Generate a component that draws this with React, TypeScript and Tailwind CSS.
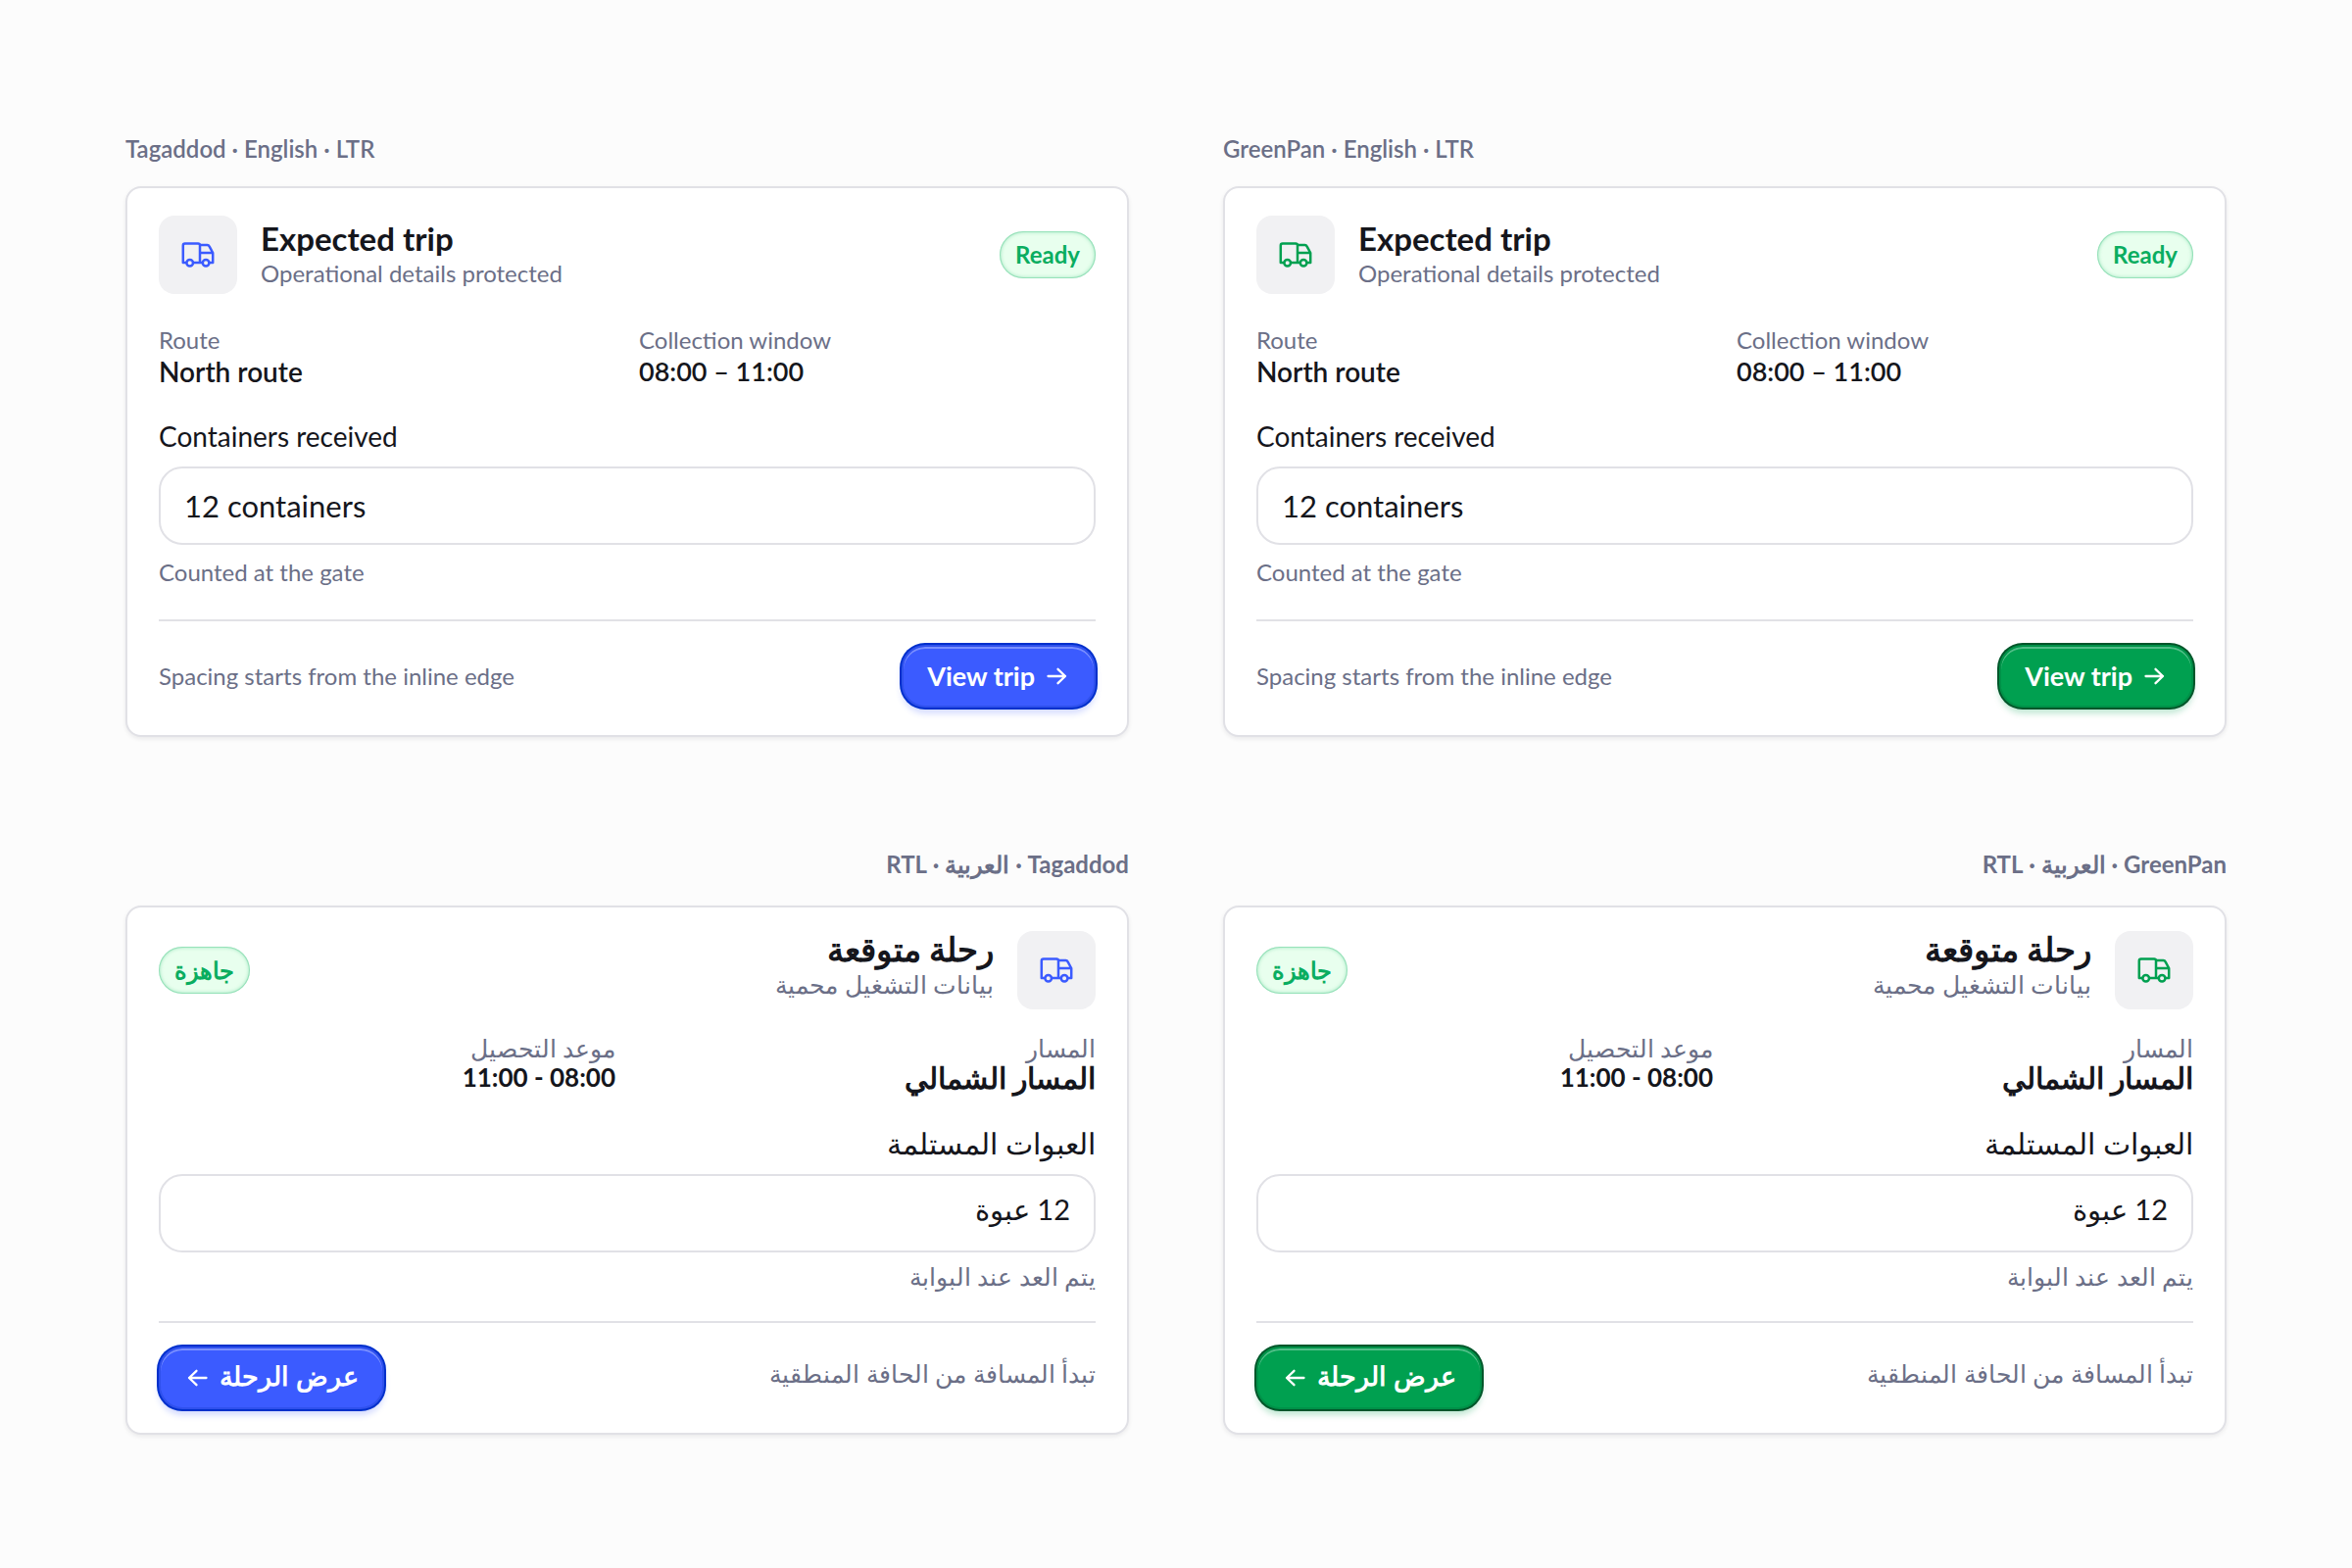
import clsx from "clsx";
import { useId } from "react";

type Dir = "ltr" | "rtl";
type Brand = "tagaddod" | "greenpan";

const content = {
  ltr: {
    language: "English",
    title: "Expected trip",
    subtitle: "Operational details protected",
    status: "Ready",
    routeLabel: "Route",
    route: "North route",
    windowLabel: "Collection window",
    window: "08:00 – 11:00",
    field: "Containers received",
    value: "12 containers",
    hint: "Counted at the gate",
    note: "Spacing starts from the inline edge",
    action: "View trip",
  },
  rtl: {
    language: "العربية",
    title: "رحلة متوقعة",
    subtitle: "بيانات التشغيل محمية",
    status: "جاهزة",
    routeLabel: "المسار",
    route: "المسار الشمالي",
    windowLabel: "موعد التحصيل",
    window: "08:00 - 11:00",
    field: "العبوات المستلمة",
    value: "12 عبوة",
    hint: "يتم العد عند البوابة",
    note: "تبدأ المسافة من الحافة المنطقية",
    action: "عرض الرحلة",
  },
};

const brands = {
  tagaddod: {
    name: "Tagaddod",
    icon: "text-[#3b5bff]",
    button:
      "border-[#2f50ec] bg-[#3b5bff] shadow-[0_0_0_2px_#0030cc,0_6px_6px_rgba(59,91,255,0.22),inset_0_2px_0_rgba(255,255,255,0.32)]",
  },
  greenpan: {
    name: "GreenPan",
    icon: "text-[#00a050]",
    button:
      "border-[#009148] bg-[#00a050] shadow-[0_0_0_2px_#00562a,0_6px_6px_rgba(0,160,80,0.25),inset_0_2px_0_rgba(255,255,255,0.32)]",
  },
};

const TruckIcon = () => (
  <svg
    className="size-10"
    viewBox="0 0 40 40"
    fill="none"
    stroke="currentColor"
    strokeWidth="2.5"
    strokeLinejoin="round"
    aria-hidden="true"
  >
    <path d="M8.3 28H4.8V10.4a2 2 0 0 1 2-2h13.4a1.8 1.8 0 0 1 1.8 1.8V28" />
    <path d="M15.1 28h9.6M31.4 28h3.8V18l-3.6-6.6a2.4 2.4 0 0 0-2.1-1.3H22M22 18h13.2" />
    <circle cx="11.7" cy="28.2" r="3.3" />
    <circle cx="28.1" cy="28.2" r="3.3" />
  </svg>
);

const ArrowIcon = ({ dir }: { dir: Dir }) => (
  <svg
    className="size-7"
    viewBox="0 0 28 28"
    fill="none"
    stroke="currentColor"
    strokeWidth="2.3"
    strokeLinecap="round"
    strokeLinejoin="round"
    aria-hidden="true"
  >
    <path
      d={
        dir === "rtl"
          ? "M22.5 14H5M12.5 6.8 5 14l7.5 7.2"
          : "M5.5 14H23M15.5 6.8 23 14l-7.5 7.2"
      }
    />
  </svg>
);

const TripCard = ({ brand, dir }: { brand: Brand; dir: Dir }) => {
  const id = useId();
  const t = content[dir];
  const b = brands[brand];
  const rtl = dir === "rtl";
  const small = rtl ? "text-[25px]" : "text-[24px]";
  const medium = rtl ? "text-[30px]" : "text-[28px]";

  return (
    <section dir={dir} lang={rtl ? "ar" : "en"}>
      <h2
        className={clsx(
          "text-[24px] leading-9 text-[#6b6f87]",
          rtl ? "mb-6 font-bold" : "mb-5 font-semibold"
        )}
      >
        {b.name} · {t.language} · {dir.toUpperCase()}
      </h2>

      <article
        className={clsx(
          "rounded-[16px] border-2 border-[#e1e1e6] bg-white px-8 pt-6 shadow-[0_2px_4px_rgba(20,20,40,0.08)]",
          rtl ? "pb-6" : "pb-7"
        )}
      >
        <header className={clsx("flex items-center gap-6", !rtl && "min-h-22")}>
          <div
            className={clsx(
              "flex size-20 shrink-0 items-center justify-center rounded-[16px] bg-[#f1f1f3]",
              b.icon
            )}
          >
            <TruckIcon />
          </div>
          <div className={clsx("flex-1", rtl ? "pb-2" : "pt-0.5")}>
            <h3
              className={clsx(
                "leading-9 font-bold",
                rtl ? "text-[34px]" : "text-[33px]"
              )}
            >
              {t.title}
            </h3>
            <p className={clsx("leading-9 text-[#6b6f87]", small)}>{t.subtitle}</p>
          </div>
          <span className="flex h-12 items-center rounded-full bg-[#e8ffee] px-4 text-[24px] font-bold text-[#0aad60] shadow-[inset_0_0_0_1px_rgba(10,173,96,0.2),inset_0_0_4px_rgba(10,173,96,0.5)]">
            {t.status}
          </span>
        </header>

        <dl
          className={clsx(
            "grid grid-cols-2 gap-6",
            rtl ? "mt-6 leading-[30px]" : "mt-[27px] leading-8"
          )}
        >
          <div>
            <dt className={clsx("text-[#6b6f87]", small)}>{t.routeLabel}</dt>
            <dd className={clsx(rtl ? "font-bold" : "font-semibold", medium)}>
              {t.route}
            </dd>
          </div>
          <div>
            <dt className={clsx("text-[#6b6f87]", small)}>{t.windowLabel}</dt>
            <dd className={rtl ? "text-[26px] font-bold" : "text-[27px] font-semibold"}>
              {t.window}
            </dd>
          </div>
        </dl>

        <div className={rtl ? "mt-9" : "mt-[34px]"}>
          <label htmlFor={id} className={clsx("block leading-8", medium)}>
            {t.field}
          </label>
          <input
            id={id}
            type="text"
            defaultValue={t.value}
            aria-describedby={`${id}-hint`}
            className={clsx(
              "block h-20 w-full rounded-[24px] border-2 border-[#e1e1e6] bg-white px-6",
              rtl ? "mt-4 pb-2 text-[29px]" : "mt-[15px] text-[31px]"
            )}
          />
          <p
            id={`${id}-hint`}
            className={clsx("leading-8 text-[#6b6f87]", small, rtl ? "mt-2" : "mt-3")}
          >
            {t.hint}
          </p>
        </div>

        <footer
          className={clsx(
            "flex items-center justify-between border-t-2 border-[#e1e1e6] pt-6",
            rtl ? "mt-[30px]" : "mt-8"
          )}
        >
          <p className={clsx("text-[#6b6f87]", small, rtl && "pb-2")}>{t.note}</p>
          <button
            type="button"
            className={clsx(
              "flex h-16 items-center gap-2 rounded-[24px] border-2 px-6 text-[27px] font-bold text-white",
              b.button
            )}
          >
            <span className={clsx(rtl && "pb-1")}>{t.action}</span>
            <ArrowIcon dir={dir} />
          </button>
        </footer>
      </article>
    </section>
  );
};

export default function App() {
  return (
    <main className="grid min-h-screen grid-cols-2 content-start gap-x-24 gap-y-28 bg-[#fcfcfc] px-32 pt-[134px] pb-32 font-['Lato','Noto_Sans',sans-serif] text-[#15161c]">
      <TripCard brand="tagaddod" dir="ltr" />
      <TripCard brand="greenpan" dir="ltr" />
      <TripCard brand="tagaddod" dir="rtl" />
      <TripCard brand="greenpan" dir="rtl" />
    </main>
  );
}
